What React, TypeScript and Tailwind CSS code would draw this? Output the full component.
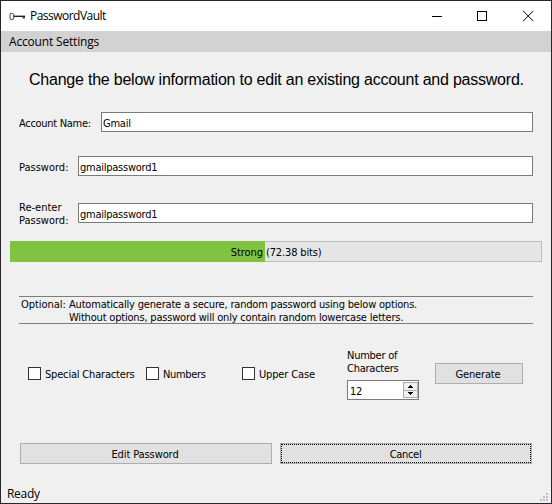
import React from "react";

function KeyIcon() {
  return (
    <svg width="17" height="9" viewBox="0 0 17 9" className="shrink-0" fill="none">
      <rect x="1" y="1.3" width="3.6" height="6.2" rx="1.6" stroke="#555" strokeWidth="1.1" />
      <path d="M5 4.3H16" stroke="#222" strokeWidth="1.4" />
      <path d="M13.5 5H16v1.5h-2.5z" fill="#444" />
    </svg>
  );
}

function Field({ value, width }: { value: string; width: string }) {
  return (
    <div className={`${width} h-5 shrink-0 whitespace-nowrap border border-[#7a7a7a] bg-white pl-px pt-[4px] tracking-[-0.25px]`}>
      {value}
    </div>
  );
}

function Check({ label, width, tracking }: { label: string; width: string; tracking: string }) {
  return (
    <div className={`${width} ${tracking} flex h-[13px] shrink-0 items-center whitespace-nowrap`}>
      <span className="mr-[4px] size-[13px] shrink-0 border border-[#333] bg-white" />
      <span className="pt-px">{label}</span>
    </div>
  );
}

export default function App() {
  return (
    <div className="flex h-[504px] w-[552px] flex-col overflow-hidden border border-[#29262a] bg-[#f0f0f0] font-['DejaVu_Sans_Condensed','DejaVu_Sans',sans-serif] text-[11px] leading-[13px] tracking-[-0.3px] text-black">
      <header className="flex h-[30px] shrink-0 items-center bg-white pl-2 font-['Open_Sans',sans-serif] text-[12px] tracking-[-0.52px]">
        <KeyIcon />
        <span className="ml-[4px] leading-4">PasswordVault</span>
        <div className="ml-auto flex items-center pr-[17px]">
          <svg width="10" height="10" shapeRendering="crispEdges"><path d="M0 5.5h10" stroke="#000" /></svg>
          <svg width="10" height="10" className="ml-[35px]" shapeRendering="crispEdges"><rect x=".5" y=".5" width="9" height="9" fill="none" stroke="#000" /></svg>
          <svg width="11" height="10" className="ml-[36px]"><path d="M.2 0l10 10M10.2 0l-10 10" stroke="#000" /></svg>
        </div>
      </header>
      <nav className="h-[21px] shrink-0 bg-[#d2d2d2] pl-2 pt-[3px] font-['Open_Sans',sans-serif] text-[12px] leading-4 tracking-[-0.18px]">Account Settings</nav>
      <h1 className="mt-[18px] h-5 shrink-0 whitespace-nowrap pl-[28px] font-['Liberation_Sans',Arial,sans-serif] text-[16px] leading-5 tracking-[-0.225px]">
        Change the below information to edit an existing account and password.
      </h1>
      <div className="mt-[22px] flex h-5 shrink-0">
        <label className="w-[100px] pl-[18px] pt-[5px]">Account Name:</label>
        <Field value="Gmail" width="w-[432px]" />
      </div>
      <div className="mt-[24px] flex h-5 shrink-0">
        <label className="w-[77px] pl-[18px] pt-[5px] tracking-[0]">Password:</label>
        <Field value="gmailpassword1" width="w-[455px]" />
      </div>
      <div className="mt-[24px] flex h-[26px] shrink-0 items-center">
        <label className="w-[77px] pl-[18px] pt-[2px] tracking-[0]">Re-enter<br />Password:</label>
        <Field value="gmailpassword1" width="w-[455px]" />
      </div>
      <div className="ml-[9px] mt-[15px] flex h-[21px] w-[532px] shrink-0">
        <div className="w-[255px] bg-[#80c342] pr-[2px] pt-[5px] text-right tracking-[-0.05px]">Strong</div>
        <div className="flex-1 border border-l-0 border-[#bcbcbc] bg-[#e6e6e6] pl-px pt-[4px] tracking-[-0.15px]">(72.38 bits)</div>
      </div>
      <div className="ml-[18px] mt-[34px] h-[28px] w-[514px] shrink-0 border-y border-[#7d7d7d] pl-[2px] pt-px">
        <div className="flex whitespace-nowrap">
          <span className="w-[48px] shrink-0 tracking-[-0.05px]">Optional:</span>
          <span className="tracking-[-0.19px]">Automatically generate a secure, random password using below options.<br />Without options, password will only contain random lowercase letters.</span>
        </div>
      </div>
      <div className="ml-[27px] mt-[25px] flex h-[51px] shrink-0">
        <div className="flex pt-[18px]">
          <Check label="Special Characters" width="w-[118px]" tracking="tracking-[-0.18px]" />
          <Check label="Numbers" width="w-[96px]" tracking="tracking-[-0.35px]" />
          <Check label="Upper Case" width="w-[105px]" tracking="tracking-[-0.15px]" />
        </div>
        <div className="w-[88px]">
          <div className="h-[31px] tracking-[-0.25px]">Number of<br />Characters</div>
          <div className="flex h-5 w-[72px] border border-[#7a7a7a] bg-white pl-[2px]">
            <span className="flex-1 pt-[4px] tracking-[-0.4px]">12</span>
            <svg width="15" height="18" viewBox="0 0 15 18" shapeRendering="crispEdges">
              <rect x=".5" y="1.5" width="14" height="8" fill="#f0f0f0" stroke="#acacac" />
              <rect x=".5" y="9.5" width="14" height="7" fill="#f0f0f0" stroke="#acacac" />
              <path d="M7 4h1v1h1v1h1v1H5V6h1V5h1zM5 11h5v1H9v1H8v1H7v-1H6v-1H5z" fill="#000" />
            </svg>
          </div>
        </div>
        <button className="mt-[14px] h-[21px] w-[88px] border border-[#adadad] bg-[#e1e1e1] pr-[2px] pt-[2px] tracking-[-0.15px]">Generate</button>
      </div>
      <div className="ml-[19px] mt-[43px] flex h-[21px] shrink-0 gap-2">
        <button className="w-[252px] border border-[#adadad] bg-[#e1e1e1] pr-[2px] pt-[2px] tracking-[-0.1px]">Edit Password</button>
        <button className="w-[252px] border border-[#adadad] bg-[#e1e1e1]">
          <span className="flex h-full items-center justify-center border border-dotted border-black pr-px pt-[2px]">Cancel</span>
        </button>
      </div>
      <footer className="mt-auto flex h-[20px] items-end justify-between pb-px pl-[6px] pr-[3px] font-['Open_Sans',sans-serif] text-[12px] leading-4 tracking-[-0.3px]">
        <span>Ready</span>
        <svg width="8" height="8" shapeRendering="crispEdges" className="mb-[1px]">
          <path d="M6 0h2v2H6zM3 3h2v2H3zM6 3h2v2H6zM0 6h2v2H0zM3 6h2v2H3zM6 6h2v2H6z" fill="#bfbfbf" />
        </svg>
      </footer>
    </div>
  );
}
